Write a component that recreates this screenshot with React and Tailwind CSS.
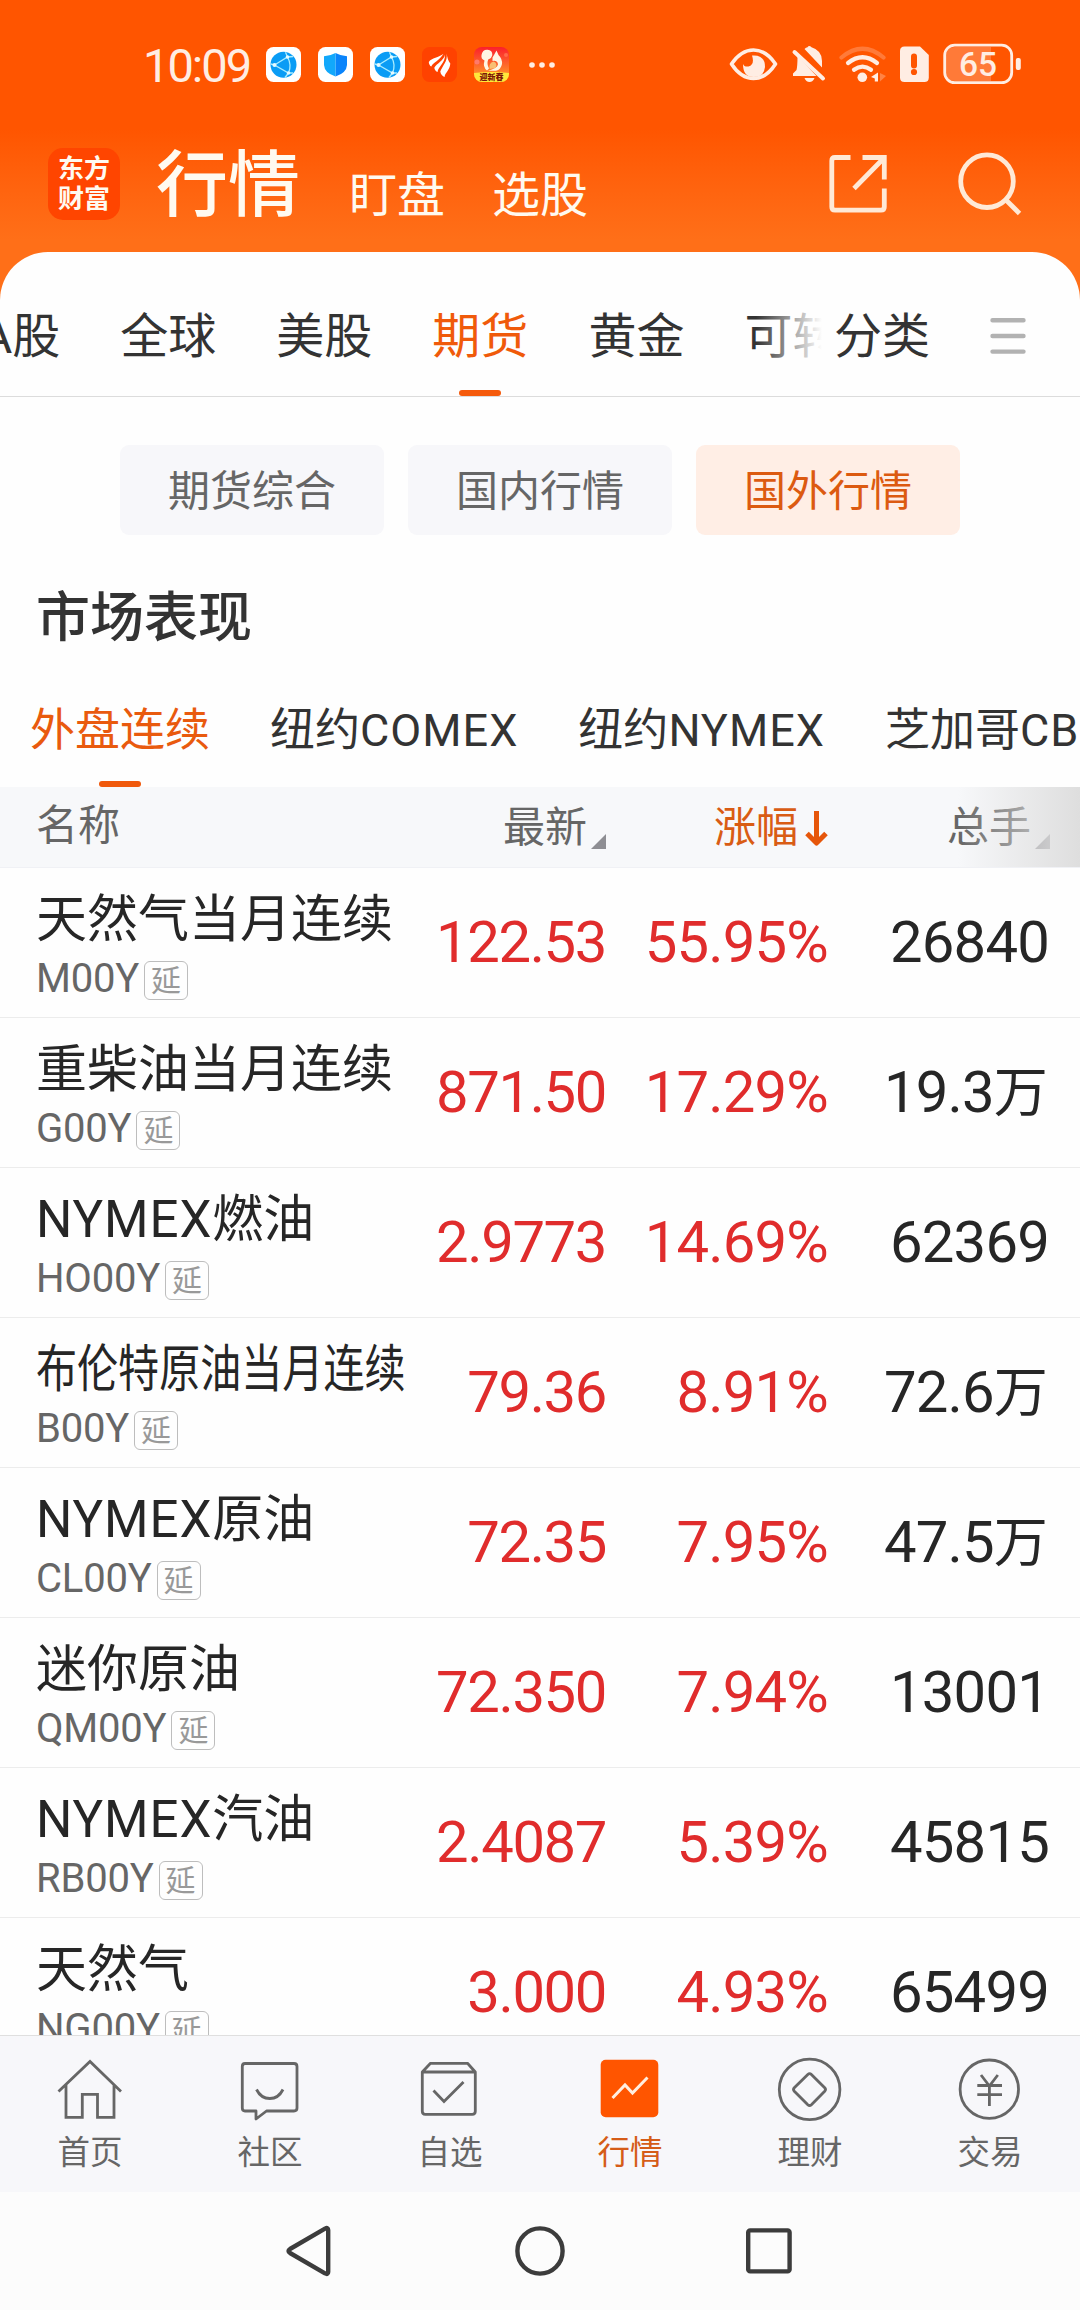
import React from "react";

const QUOTES = [
  { name: "天然气当月连续", code: "M00Y", price: "122.53", change: "55.95%", volume: "26840" },
  { name: "重柴油当月连续", code: "G00Y", price: "871.50", change: "17.29%", volume: "19.3", unit: "万" },
  { latin: "NYMEX", name: "燃油", code: "HO00Y", price: "2.9773", change: "14.69%", volume: "62369" },
  { name: "布伦特原油当月连续", code: "B00Y", price: "79.36", change: "8.91%", volume: "72.6", unit: "万", condensed: true },
  { latin: "NYMEX", name: "原油", code: "CL00Y", price: "72.35", change: "7.95%", volume: "47.5", unit: "万" },
  { name: "迷你原油", code: "QM00Y", price: "72.350", change: "7.94%", volume: "13001" },
  { latin: "NYMEX", name: "汽油", code: "RB00Y", price: "2.4087", change: "5.39%", volume: "45815" },
  { name: "天然气", code: "NG00Y", price: "3.000", change: "4.93%", volume: "65499" },
];

/* ---------- status bar ---------- */

function GlobeApp() {
  return (
    <svg className="size-[35px]" viewBox="0 0 35 35">
      <rect width="35" height="35" rx="7.5" fill="#fff" />
      <circle cx="17.5" cy="17.8" r="13" fill="#0a9cf5" />
      <g fill="none" stroke="#a9ecff" strokeWidth="1.3">
        <path d="M8.5 18 L21.5 10 Q26 18 22.5 26 Z" />
        <path d="M21.5 10 L19.5 5.2 M21.5 10 L27 9.5 M8.5 18 L4.8 17 M22.5 26 L27 26 M22.5 26 L19 30.5" />
      </g>
      <g fill="#e6faff">
        <circle cx="8.5" cy="18" r="2" />
        <circle cx="21.5" cy="10" r="1.8" />
        <circle cx="22.5" cy="26" r="1.8" />
      </g>
    </svg>
  );
}

function ShieldApp() {
  return (
    <svg className="size-[35px]" viewBox="0 0 35 35">
      <rect width="35" height="35" rx="7.5" fill="#fff" />
      <path d="M17.5 6 Q23 9 29 9.3 V18 Q28.5 26 17.5 29.5 Z" fill="#0a84fb" />
      <path d="M17.5 6 Q12 9 6 9.3 V18 Q6.5 26 17.5 29.5 Z" fill="#12a8fb" />
    </svg>
  );
}

function WingApp() {
  return (
    <svg className="size-[35px]" viewBox="0 0 35 35">
      <rect width="35" height="35" rx="7.5" fill="#ff4200" />
      <g fill="#fff">
        <path d="M21.5 6.8 C17 10.5 9.5 11 6.8 15 C6.8 17 8 19 9.3 19.6 C11 15.5 17.5 13.5 21.5 6.8Z" />
        <path d="M23 7.8 C21.5 14 14.5 16.5 12.3 20.8 C12.6 23 14 24.6 15.6 25 C16 19.8 23.3 16 23 7.8Z" />
        <path d="M24.6 6.4 C26 14.5 20.3 18.5 18.3 24.5 C18.6 27.3 20.5 29.4 22.6 30 C22.8 26 28 23 28.3 16.5 C26.3 14 25.3 10.5 24.6 6.4Z" />
      </g>
    </svg>
  );
}

function SquirrelApp() {
  return (
    <div className="relative size-[35px] overflow-hidden rounded-[8px]">
      <svg className="size-[35px]" viewBox="0 0 35 35">
        <defs>
          <linearGradient id="festive" x1="0" y1="0" x2="0" y2="1">
            <stop offset="0" stopColor="#fb1f2c" />
            <stop offset="0.75" stopColor="#ff8a2b" />
          </linearGradient>
        </defs>
        <rect width="35" height="35" fill="url(#festive)" />
        <circle cx="3" cy="15" r="2.5" fill="#ff7a6a" />
        <circle cx="32" cy="8" r="2" fill="#ff6a4a" />
        <path
          d="M7.5 8 Q8.5 2.5 13.5 2.8 Q18.5 3 18.3 8 Q17.5 11.5 14.2 12.5 Q12.5 17 15 21.5 L13 23.5 Q8.5 20 10.5 13.5 Q6.8 12 7.5 8Z"
          fill="#fff6e4"
        />
        <path d="M18.5 10.5 L20 8 L22.5 3.5 L24.5 8 Q28.5 12 28 17 Q27 22.5 22 23.8 H14 Q23 21.5 24 17.5 Q23.5 13 18.5 14Z" fill="#fff6e4" />
        <path d="M15.5 22 Q14.5 16 19.5 14.5 Q24 16 21.5 21Z" fill="#f8bf72" />
        <path d="M0 26 Q17 24 35 26 V35 H0Z" fill="#ffe93b" />
      </svg>
      <span className="absolute inset-x-0 bottom-0 text-center text-[8px] font-black leading-[9px] text-[#7c1408]">
        迎新春
      </span>
    </div>
  );
}

function StatusBar() {
  return (
    <div className="flex h-[130px] items-start pl-[143px] text-[#ffede3]">
      <div className="mt-[42px] w-[123px] font-[Roboto] text-[47px] leading-[48px] tracking-[-2px] whitespace-nowrap">10:09</div>
      <div className="mt-[47px] flex items-center gap-[17px]">
        <GlobeApp />
        <ShieldApp />
        <GlobeApp />
        <WingApp />
        <SquirrelApp />
        <svg className="ml-[2px] h-[8px] w-[28px]" viewBox="0 0 28 8" fill="currentColor">
          <circle cx="4" cy="4" r="2.8" />
          <circle cx="14" cy="4" r="2.8" />
          <circle cx="24" cy="4" r="2.8" />
        </svg>
      </div>
      <svg className="mt-[42px] ml-auto h-[44px] w-[352px]" viewBox="728 42 352 44">
        <path
          d="M731.5 64 Q741 50 753.5 50 Q766 50 775.5 64 Q766 78.5 753.5 78.5 Q741 78.5 731.5 64Z"
          fill="none"
          stroke="currentColor"
          strokeWidth="3.6"
          strokeLinejoin="round"
        />
        <path d="M752 55.5 Q765 54.5 765 67 Q764 77 753.5 77 Q743 77 743 64 Q744 67 748.5 66.5 Q755 64.5 752 55.5Z" fill="currentColor" />
        <g fill="currentColor">
          <path d="M804.5 49 Q806 47.5 807.5 47.3 Q809 44.8 811.5 47.3 Q822 50.5 822 61 V67.5Z" />
          <path d="M797.5 56 L816.5 76 H793 V73.5 L796.5 70 Q797.5 66 797.5 56Z" />
          <path d="M804.5 78 H814.5 Q813 82 809.5 82 Q806 82 804.5 78Z" />
        </g>
        <path d="M798 51.5 L825 77" stroke="#ff5500" strokeWidth="5" />
        <path d="M794.5 52 L823 78.5" stroke="currentColor" strokeWidth="4" strokeLinecap="round" />
        <g fill="none" stroke="currentColor" strokeLinecap="round" strokeWidth="4.2">
          <path d="M841.5 57.5 Q862.5 40 883.5 57.5" opacity="0.25" />
          <path d="M848 63 Q862.5 51.5 877 63" />
          <path d="M854 69.8 Q862.5 63.5 871 69.8" />
        </g>
        <circle cx="862.3" cy="77.3" r="4.8" fill="currentColor" />
        <path d="M871 77 L878 72.5 V81.5 H874.8 V78.5Z" fill="currentColor" />
        <path d="M880 73 V81.5 L886 76Z" fill="currentColor" opacity="0.3" />
        <path d="M904.5 46.5 H920 L928.8 55 V77.5 Q928.8 82 924.3 82 H904.5 Q900 82 900 77.5 V51 Q900 46.5 904.5 46.5Z" fill="currentColor" />
        <path d="M914 56.5 V65.5" stroke="#ff5500" strokeWidth="6" strokeLinecap="round" />
        <circle cx="914" cy="72" r="3.1" fill="#ff5500" />
        <path d="M991 47 H955 Q946 47 946 56 V72 Q946 81 955 81 H991Z" fill="#ff7a38" />
        <rect x="944.7" y="45.2" width="67" height="37.4" rx="10" fill="none" stroke="currentColor" strokeWidth="2.8" />
        <rect x="1015.8" y="58" width="5" height="12" rx="2" fill="currentColor" />
        <text x="978" y="76.2" textAnchor="middle" fontFamily="Roboto" fontSize="33.5" fontWeight="500" fill="currentColor">
          65
        </text>
      </svg>
    </div>
  );
}

/* ---------- app header ---------- */

function Header() {
  return (
    <div className="flex h-[170px] items-start pl-12 text-[#fffaf0]">
      <div className="mt-[18px] flex size-[72px] flex-col items-center justify-center rounded-[15px] bg-[#ff4500] text-[26px] font-bold leading-[30px]">
        <span>东方</span>
        <span>财富</span>
      </div>
      <div className="mt-[14px] ml-9 text-[72px] font-medium leading-[84px]">行情</div>
      <div className="mt-[40px] ml-[49px] text-[48px] leading-[52px]">盯盘</div>
      <div className="mt-[40px] ml-[47px] text-[48px] leading-[52px]">选股</div>
      <svg className="mt-[18px] ml-auto h-[72px] w-[252px] text-[#ffe9d6]" viewBox="828 148 252 72" fill="none" stroke="currentColor" strokeWidth="4.8">
        <path d="M850.5 157.5 H835 Q831.8 157.5 831.8 160.7 V207 Q831.8 210.2 835 210.2 H881 Q884.3 210.2 884.3 207 V188.5" />
        <path d="M862.5 157.5 H884.3 V179.5 M884 158 L854 188.5" />
        <circle cx="987" cy="181.2" r="26.3" />
        <path d="M1006 200 L1019.5 213.5" />
      </svg>
    </div>
  );
}

/* ---------- market tabs ---------- */

function MarketTabs() {
  return (
    <div className="flex h-[145px] border-b border-[#dcdcdc] text-[48px] leading-[60px] text-[#333]">
      <div className="relative w-[822px] shrink-0 overflow-hidden">
        <div className="-ml-[19px] flex h-full items-end gap-[60px] whitespace-nowrap">
          <div className="mb-[29px] flex w-[80px] justify-end">A股</div>
          <div className="mb-[29px]">全球</div>
          <div className="mb-[29px]">美股</div>
          <div className="flex flex-col items-center gap-[23px] text-[#f05a0a]">
            期货
            <span className="h-[6px] w-[42px] rounded-full bg-[#f55a0c]" />
          </div>
          <div className="mb-[29px]">黄金</div>
          <div className="mb-[29px]">可转债</div>
        </div>
        <div className="absolute top-0 right-0 h-[135px] w-[66px] bg-linear-to-r from-[#fefefe]/0 to-[#fefefe]" />
      </div>
      <div className="mt-[55px] ml-3">分类</div>
      <svg className="mt-[66px] ml-[60px] h-[36px] w-[36px]" viewBox="0 0 36 36" stroke="#b2b2b2" strokeWidth="4.4" strokeLinecap="round">
        <path d="M2.5 2.2 H33.5 M2.5 18 H33.5 M2.5 33.6 H33.5" />
      </svg>
    </div>
  );
}

function Segments() {
  const base = "flex h-[90px] w-[264px] items-center justify-center rounded-[9px] pt-[2px] text-[42px]";
  return (
    <div className="mt-12 flex justify-center gap-6">
      <div className={`${base} bg-[#f7f7fa] text-[#666]`}>期货综合</div>
      <div className={`${base} bg-[#f7f7fa] text-[#666]`}>国内行情</div>
      <div className={`${base} bg-[#ffeee5] text-[#dc5a10]`}>国外行情</div>
    </div>
  );
}

function ExchangeTabs() {
  return (
    <div className="flex h-[87px] gap-[60px] overflow-hidden pt-[1px] pl-[30px] text-[45px] leading-[60px] whitespace-nowrap text-[#333]">
      <div className="flex flex-col items-center gap-[20px] text-[#e95a0e]">
        外盘连续
        <span className="h-[6px] w-[42px] shrink-0 rounded-full bg-[#f0590c]" />
      </div>
      <div>
        纽约<span className="tracking-[1px]">COMEX</span>
      </div>
      <div>
        纽约<span className="tracking-[1px]">NYMEX</span>
      </div>
      <div>
        芝加哥<span className="tracking-[1px]">CBOT</span>
      </div>
    </div>
  );
}

/* ---------- quote table ---------- */

function SortCorner() {
  return (
    <svg className="mt-[36px] ml-[4px] h-[15px] w-[15px]" viewBox="0 0 15 15">
      <path d="M15 0 V15 H0Z" fill="#8e8e93" />
    </svg>
  );
}

function TableHead() {
  return (
    <div className="relative flex h-[81px] border-b border-[#f0f1f5] bg-[#f7f8fa] pl-9 text-[42px] leading-[60px] text-[#666]">
      <div className="mt-[9px] w-[340px]">名称</div>
      <div className="mt-[11px] flex w-[230px] items-start justify-end">
        最新
        <SortCorner />
      </div>
      <div className="mt-[11px] flex w-[222px] justify-end text-[#d95c14]">
        涨幅
        <svg className="mt-[13px] ml-[7px] h-[36px] w-[23px]" viewBox="0 0 23 36" fill="none" stroke="#e6560a" strokeWidth="5">
          <path d="M11.5 0 V32 M2 22.5 L11.5 32 L21 22.5" strokeLinejoin="round" />
        </svg>
      </div>
      <div className="mt-[11px] flex w-[222px] items-start justify-end">
        总手
        <SortCorner />
      </div>
      <div className="absolute top-0 right-0 h-[80px] w-[122px] bg-linear-to-r from-[#dedede]/0 to-[#dedede]" />
    </div>
  );
}

function QuoteRow({ quote }) {
  return (
    <div className="flex h-[150px] shrink-0 border-b border-[#ececec] pl-9 font-[Roboto,'Noto_Sans_CJK_SC',sans-serif] text-[#262626]">
      <div className="mt-[20px] w-[341px] whitespace-nowrap">
        {quote.condensed ? (
          <div className="w-[459px] origin-left scale-x-[0.805] text-[51px] leading-[64px]">{quote.name}</div>
        ) : (
          <div className="text-[51px] leading-[64px]">
            {quote.latin && <span className="tracking-[0.9px]">{quote.latin}</span>}
            {quote.name}
          </div>
        )}
        <div className="flex items-start text-[40px] leading-[48px] text-[#666]">
          <span className="mt-[3px] tracking-[-0.2px]">{quote.code}</span>
          <span className="mt-[9px] ml-[5px] flex h-[39px] w-[44px] items-center justify-center rounded-[6px] border-[1.5px] border-[#bdbdbd] text-[30px] leading-[36px] text-[#999]">
            延
          </span>
        </div>
      </div>
      <div className="mt-[39px] w-[229px] text-right text-[58px] leading-[70px] tracking-[-1.4px] text-[#e02c2c]">{quote.price}</div>
      <div className="mt-[39px] w-[222px] text-right text-[58px] leading-[70px] tracking-[-0.8px] text-[#e02c2c]">{quote.change}</div>
      <div className="mt-[39px] w-[221px] text-right text-[58px] leading-[70px] tracking-[-0.8px]">
        {quote.volume}
        {quote.unit && <span className="mr-[2px] text-[54px]">{quote.unit}</span>}
      </div>
    </div>
  );
}

/* ---------- bottom bars ---------- */

function TabItem({ label, active, children }) {
  return (
    <div className={active ? "flex w-[180px] flex-col items-center text-[#d55c18]" : "flex w-[180px] flex-col items-center text-[#666]"}>
      <svg className="mt-[18px] size-[72px]" viewBox="0 0 72 72" fill="none" stroke="#666" strokeWidth="2.8">
        {children}
      </svg>
      <span className="mt-[7px] text-[32.5px] leading-[40px]">{label}</span>
    </div>
  );
}

function BottomTabs() {
  return (
    <div className="flex h-[157px] shrink-0 border-t border-[#dfdfdf] bg-[#f7f7fa]">
      <TabItem label="首页">
        <path d="M4.5 37.5 L36 7.5 L67 37.5 M12 31 V63.3 H28.3 V40.3 H43.5 V63.3 H60 V31" />
      </TabItem>
      <TabItem label="社区">
        <path d="M11 9.5 H60 Q63 9.5 63 12.5 V54 Q63 57 60 57 H32.5 L22 65 V57 H11 Q8.3 57 8.3 54 V12.5 Q8.3 9.5 11 9.5Z" strokeLinejoin="round" />
        <path d="M22.5 35.5 Q27 44.5 35.8 44.5 Q44.5 44.5 49 35.5" />
      </TabItem>
      <TabItem label="自选">
        <path d="M8.3 18 L16.5 9.3 H53.5 L61.3 18 V57.3 Q61.3 60.3 58.3 60.3 H11.3 Q8.3 60.3 8.3 57.3Z M8.3 18 H61.3" strokeLinejoin="round" />
        <path d="M19.5 36.5 L30 47.5 L49.5 28" />
      </TabItem>
      <TabItem label="行情" active>
        <rect x="6.7" y="5.7" width="57.6" height="57.6" rx="5" fill="#ff5500" stroke="none" />
        <path d="M18.5 44 L31 31 L38.5 39 L53.5 23.5" stroke="#ffeee0" strokeWidth="3" />
      </TabItem>
      <TabItem label="理财">
        <circle cx="35.6" cy="35.4" r="30.3" />
        <path d="M33.8 20.5 Q35.6 18.8 37.4 20.5 L50.7 33.8 Q52.3 35.5 50.7 37.2 L37.4 50.7 Q35.6 52.4 33.8 50.7 L20.3 37.2 Q18.7 35.5 20.3 33.8Z" />
      </TabItem>
      <TabItem label="交易">
        <circle cx="35.3" cy="35.2" r="29.2" />
        <path d="M27 21 L35.4 32 L43.8 21 M35.4 31 V52 M23.3 31.5 H48 M23.3 40.7 H48" />
      </TabItem>
    </div>
  );
}

function SystemNav() {
  return (
    <div className="flex h-[118px] shrink-0 items-center justify-center gap-[176px] bg-[#fcfcfc]">
      <svg className="size-[54px]" viewBox="0 0 54 54" fill="none" stroke="#3c3c3c" strokeWidth="4.4" strokeLinejoin="round">
        <path d="M42 4.6 Q45.2 3 45.2 6 V48 Q45.2 51 42 49.4 L7 29 Q4 27 7 25Z" />
      </svg>
      <svg className="size-[54px]" viewBox="0 0 54 54" fill="none" stroke="#3c3c3c" strokeWidth="4.4">
        <circle cx="27" cy="27" r="22.6" />
      </svg>
      <svg className="size-[54px]" viewBox="0 0 54 54" fill="none" stroke="#3c3c3c" strokeWidth="4.4">
        <rect x="5.2" y="6.4" width="41.4" height="41" rx="2" />
      </svg>
    </div>
  );
}

export default function App() {
  return (
    <div className="flex h-[2310px] w-[1080px] flex-col overflow-hidden bg-white font-[Roboto,'Noto_Sans_CJK_SC',sans-serif]">
      <div className="h-[300px] shrink-0 bg-linear-to-b from-[#ff5500] from-[43%] to-[#ff6f18] to-[80%]">
        <StatusBar />
        <Header />
      </div>
      <div className="-mt-12 flex min-h-0 flex-1 flex-col rounded-t-[48px] bg-[#fefefe]">
        <MarketTabs />
        <Segments />
        <div className="mt-[47px] h-[118px] pl-9 text-[54px] font-medium leading-[74px] text-[#333]">市场表现</div>
        <ExchangeTabs />
        <TableHead />
        <div className="flex min-h-0 flex-1 flex-col overflow-hidden">
          {QUOTES.map((quote) => (
            <QuoteRow key={quote.code} quote={quote} />
          ))}
        </div>
      </div>
      <BottomTabs />
      <SystemNav />
    </div>
  );
}
